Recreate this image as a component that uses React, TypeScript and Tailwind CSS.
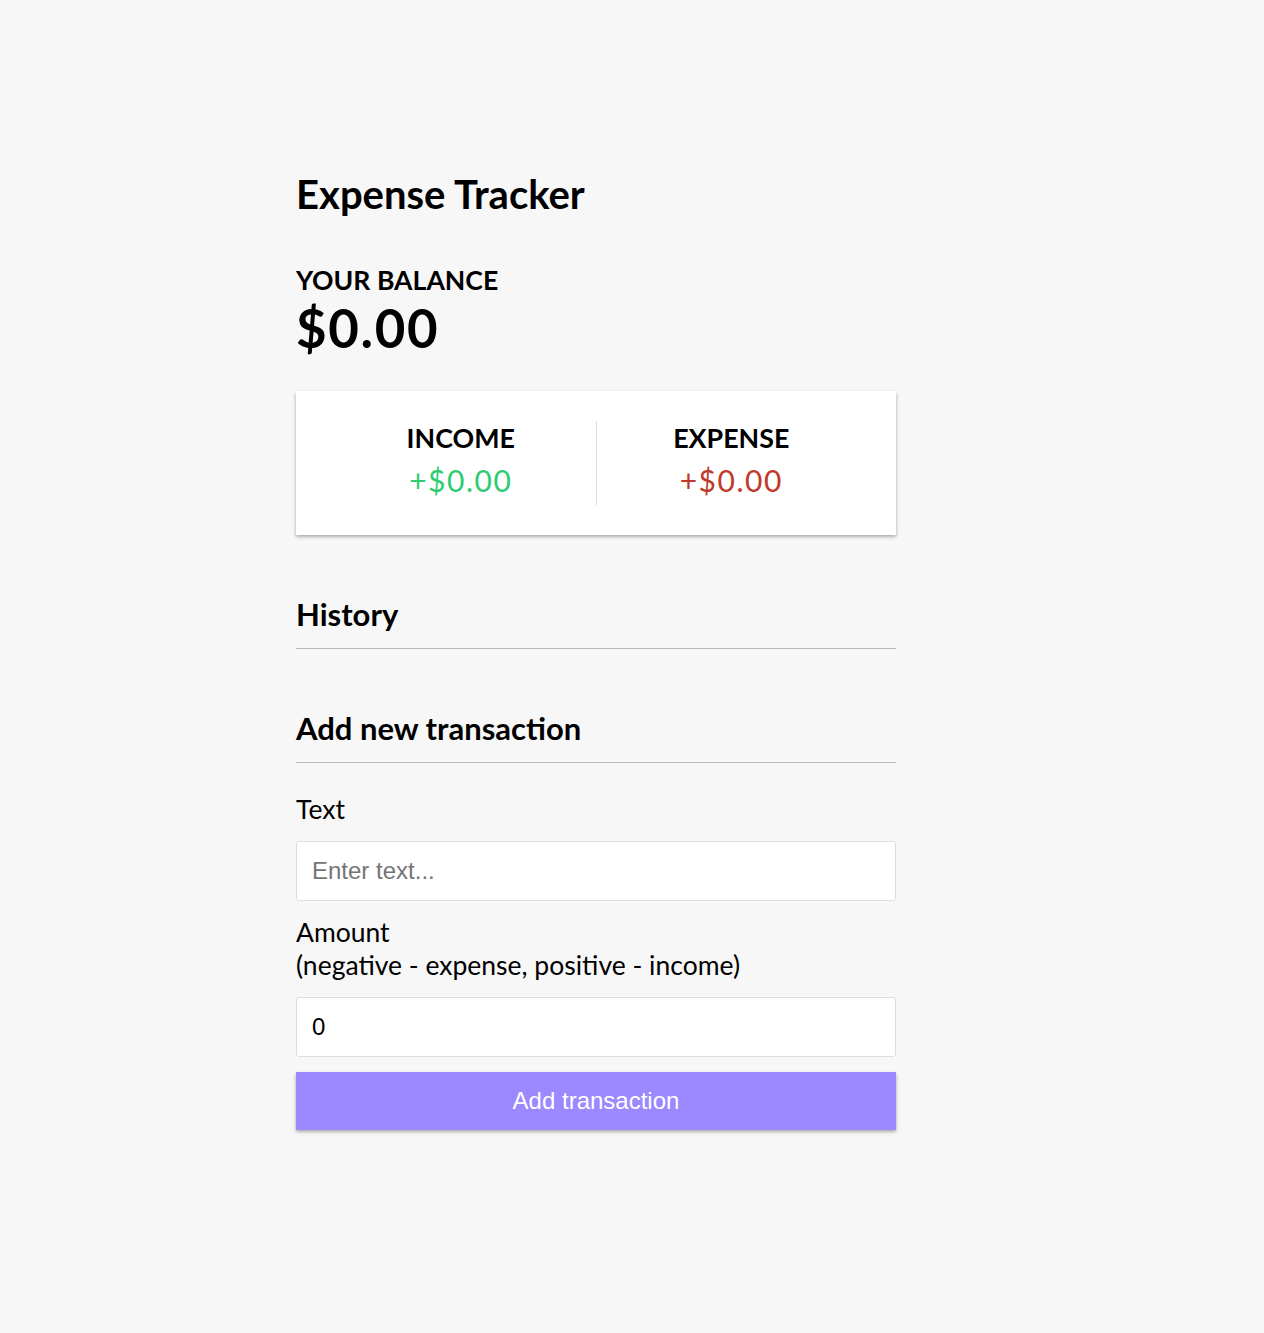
import { useState } from "react";

export default function App() {
  const [text, setText] = useState("");
  const [amount, setAmount] = useState("0");

  return (
    <div className="min-h-screen bg-[#f7f7f7] font-['Lato','Noto_Sans',sans-serif] text-[26.5px] text-black">
      <div className="ml-[296px] w-[600px] pt-[171px]">
        <h2 className="m-0 text-[40px] font-bold leading-[46px]">Expense Tracker</h2>

        <h4 className="mt-[47px] text-[26.6px] font-bold uppercase leading-[33px]">Your Balance</h4>
        <h1 className="m-0 text-[52.8px] font-bold leading-[62px] tracking-[1.65px]">$0.00</h1>

        <div className="mt-[32px] flex bg-white p-[30px] shadow-[0_1.5px_4.5px_rgba(0,0,0,0.12),0_1.5px_3px_rgba(0,0,0,0.24)]">
          <div className="flex-1 border-r border-[#dedede] text-center">
            <h4 className="text-[26.8px] font-bold uppercase leading-[34px]">Income</h4>
            <p className="my-[7px] text-[30px] leading-[36px] tracking-[1.5px] text-[#2ecc71]">+$0.00</p>
          </div>
          <div className="flex-1 text-center">
            <h4 className="text-[26.8px] font-bold uppercase leading-[34px]">Expense</h4>
            <p className="my-[7px] text-[30px] leading-[36px] tracking-[1.5px] text-[#c0392b]">+$0.00</p>
          </div>
        </div>

        <h3 className="mt-[60px] border-b border-[#bbb] pb-[15px] text-[31px] font-bold leading-[38px]">History</h3>
        <ul className="m-0 list-none p-0"></ul>

        <h3 className="mt-[60px] border-b border-[#bbb] pb-[15px] text-[31px] font-bold leading-[38px]">
          Add new transaction
        </h3>
        <form onSubmit={(event) => event.preventDefault()}>
          <div>
            <label htmlFor="text" className="mt-[30px] mb-[15px] block leading-[33px]">
              Text
            </label>
            <input
              id="text"
              type="text"
              value={text}
              onChange={(event) => setText(event.target.value)}
              placeholder="Enter text..."
              className="block w-full rounded-[3px] border border-[#dedede] bg-white p-[15px] font-['Liberation_Sans',Arial,sans-serif] text-[24px] leading-[28px] outline-none placeholder:text-[#757575]"
            />
          </div>
          <div>
            <label htmlFor="amount" className="mt-[15px] mb-[15px] block leading-[33px]">
              Amount <br />
              (negative - expense, positive - income)
            </label>
            <input
              id="amount"
              type="number"
              value={amount}
              onChange={(event) => setAmount(event.target.value)}
              placeholder="Enter amount..."
              className="block w-full rounded-[3px] border border-[#dedede] bg-white p-[15px] font-['Liberation_Sans',Arial,sans-serif] text-[24px] leading-[28px] outline-none [appearance:textfield]"
            />
          </div>
          <button
            type="submit"
            className="mt-[15px] mb-[45px] block w-full cursor-pointer border-0 bg-[#9c88ff] p-[15px] font-['Liberation_Sans',Arial,sans-serif] text-[24px] leading-[28px] text-white shadow-[0_1.5px_4.5px_rgba(0,0,0,0.12),0_1.5px_3px_rgba(0,0,0,0.24)]"
          >
            Add transaction
          </button>
        </form>
      </div>
    </div>
  );
}
